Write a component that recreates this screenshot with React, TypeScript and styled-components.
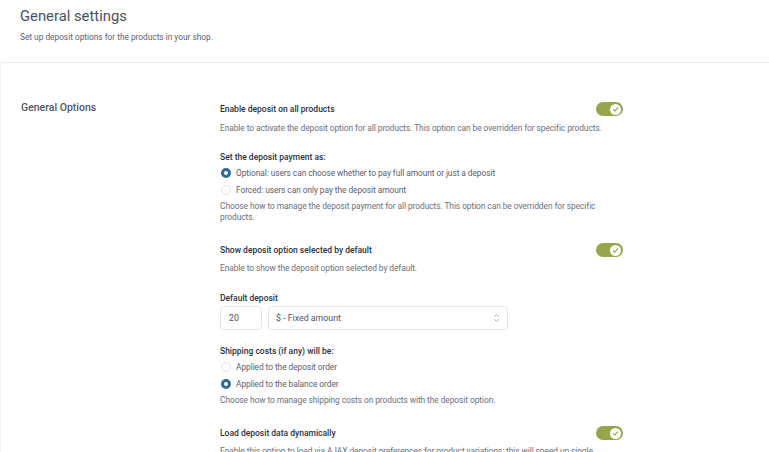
import React from "react";
import styled, { createGlobalStyle } from "styled-components";

const Global = createGlobalStyle`
  html, body { margin: 0; padding: 0; background: #ffffff; }
  body { font-family: Roboto, "Liberation Sans", sans-serif; -webkit-font-smoothing: antialiased; }
  * { box-sizing: border-box; }
`;

const Page = styled.div`
  width: 769px;
  height: 452px;
  overflow: hidden;
  background: #ffffff;
`;

const Header = styled.header`
  padding: 6px 20px 0 20px;
  height: 63px;
  border-bottom: 1px solid #eceef5;
`;

const Title = styled.h1`
  margin: 0;
  font-size: 14.8px;
  line-height: 20px;
  font-weight: 400;
  color: #4a5061;
`;

const Subtitle = styled.p`
  margin: 6px 0 0 0;
  font-size: 8.3px;
  line-height: 11px;
  color: #5b6070;
`;

const Body = styled.section`
  display: grid;
  grid-template-columns: 199px 403px;
  padding: 38px 0 0 20px;
  border-left: 1px solid #f0f1f5;
`;

const SectionTitle = styled.h2`
  margin: 0;
  font-size: 10.5px;
  line-height: 14px;
  font-weight: 500;
  color: #505665;
`;

const Fields = styled.div`
  display: flex;
  flex-direction: column;
  padding-top: 1px;
`;

const Field = styled.div<{ $top: number }>`
  display: flex;
  flex-direction: column;
  margin-top: ${(p) => p.$top}px;
`;

const LabelRow = styled.div`
  display: flex;
  align-items: center;
  justify-content: space-between;
  height: 14px;
`;

const Label = styled.div`
  font-size: 8.5px;
  line-height: 11px;
  font-weight: 500;
  color: #2c313d;
`;

const Desc = styled.p<{ $top: number }>`
  margin: ${(p) => p.$top}px 0 0 0;
  font-size: 8.4px;
  line-height: 11px;
  letter-spacing: -0.07px;
  color: #6a6f7b;
`;

const Toggle = styled.div`
  width: 27px;
  height: 14px;
  border-radius: 7px;
  background: #97a64a;
  display: flex;
  align-items: center;
  justify-content: flex-end;
  padding-right: 2px;
`;

const Knob = styled.div`
  width: 11px;
  height: 11px;
  border-radius: 50%;
  background: #ffffff;
  display: flex;
  align-items: center;
  justify-content: center;
`;

const RadioList = styled.div`
  display: flex;
  flex-direction: column;
  margin-top: 2px;
`;

const RadioRow = styled.label`
  display: flex;
  align-items: center;
  height: 16.5px;
  gap: 5px;
  font-size: 8.4px;
  letter-spacing: -0.07px;
  color: #5b606e;
`;

const RadioDot = styled.span<{ $on: boolean }>`
  width: 10px;
  height: 10px;
  border-radius: 50%;
  margin-left: 1px;
  background: #ffffff;
  border: ${(p) => (p.$on ? "3px solid #2d6a93" : "1px solid #e1e4ec")};
`;

const InputRow = styled.div`
  display: flex;
  gap: 6px;
  margin-top: 2px;
`;

const NumberBox = styled.div`
  width: 42px;
  height: 24px;
  border: 1px solid #e2e5ee;
  border-radius: 4px;
  display: flex;
  align-items: center;
  padding-left: 8px;
  font-size: 8.8px;
  color: #4f5463;
`;

const SelectBox = styled.div`
  width: 240px;
  height: 24px;
  border: 1px solid #e2e5ee;
  border-radius: 4px;
  display: flex;
  align-items: center;
  justify-content: space-between;
  padding: 0 7px 0 7px;
  font-size: 8.8px;
  color: #4f5463;
`;

const Check = () => (
  <svg width="7" height="7" viewBox="0 0 10 10">
    <path d="M2 5.3 L4.2 7.3 L8 2.8" fill="none" stroke="#97a64a" strokeWidth="1.6" strokeLinecap="round" strokeLinejoin="round" />
  </svg>
);

const Chevrons = () => (
  <svg width="7" height="10" viewBox="0 0 7 10">
    <path d="M1.5 3.5 L3.5 1.5 L5.5 3.5 M1.5 6.5 L3.5 8.5 L5.5 6.5" fill="none" stroke="#a3a8b4" strokeWidth="0.9" strokeLinecap="round" strokeLinejoin="round" />
  </svg>
);

const Switch = () => (
  <Toggle>
    <Knob>
      <Check />
    </Knob>
  </Toggle>
);

export default function App() {
  return (
    <Page>
      <Global />
      <Header>
        <Title>General settings</Title>
        <Subtitle>Set up deposit options for the products in your shop.</Subtitle>
      </Header>
      <Body>
        <SectionTitle>General Options</SectionTitle>
        <Fields>
          <Field $top={0}>
            <LabelRow>
              <Label>Enable deposit on all products</Label>
              <Switch />
            </LabelRow>
            <Desc $top={7}>
              Enable to activate the deposit option for all products. This option can be overridden for specific products.
            </Desc>
          </Field>
          <Field $top={18}>
            <Label>Set the deposit payment as:</Label>
            <RadioList>
              <RadioRow>
                <RadioDot $on />
                Optional: users can choose whether to pay full amount or just a deposit
              </RadioRow>
              <RadioRow>
                <RadioDot $on={false} />
                Forced: users can only pay the deposit amount
              </RadioRow>
            </RadioList>
            <Desc $top={3}>
              Choose how to manage the deposit payment for all products. This option can be overridden for specific products.
            </Desc>
          </Field>
          <Field $top={20}>
            <LabelRow>
              <Label>Show deposit option selected by default</Label>
              <Switch />
            </LabelRow>
            <Desc $top={6}>Enable to show the deposit option selected by default.</Desc>
          </Field>
          <Field $top={19}>
            <Label>Default deposit</Label>
            <InputRow>
              <NumberBox>20</NumberBox>
              <SelectBox>
                $ - Fixed amount
                <Chevrons />
              </SelectBox>
            </InputRow>
          </Field>
          <Field $top={16}>
            <Label>Shipping costs (if any) will be:</Label>
            <RadioList>
              <RadioRow>
                <RadioDot $on={false} />
                Applied to the deposit order
              </RadioRow>
              <RadioRow>
                <RadioDot $on />
                Applied to the balance order
              </RadioRow>
            </RadioList>
            <Desc $top={3}>Choose how to manage shipping costs on products with the deposit option.</Desc>
          </Field>
          <Field $top={20}>
            <LabelRow>
              <Label>Load deposit data dynamically</Label>
              <Switch />
            </LabelRow>
            <Desc $top={6}>
              Enable this option to load via AJAX deposit preferences for product variations; this will speed up single product pages.
            </Desc>
          </Field>
        </Fields>
      </Body>
    </Page>
  );
}
